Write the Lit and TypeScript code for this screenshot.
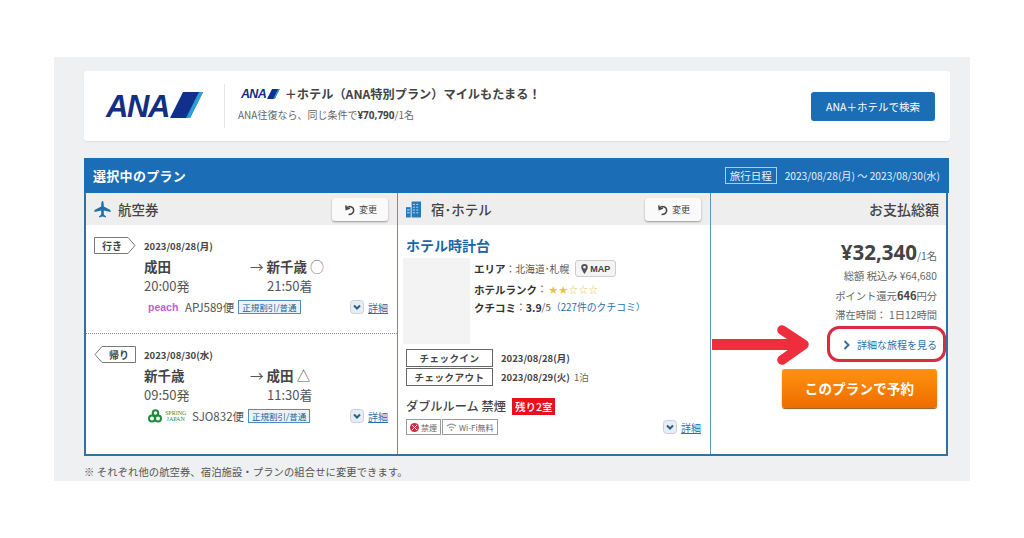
import { LitElement, html, css } from "lit";
import { customElement } from "lit/decorators.js";

const chevron = html`<svg class="chev" viewBox="0 0 14 14" width="14" height="14"><rect x=".5" y=".5" width="13" height="13" rx="3" fill="#e6edf3" stroke="#ccd"/><path d="M4 5.5 7 8.5 10 5.5" fill="none" stroke="#2a5f92" stroke-width="2"/></svg>`;
const undo = html`<svg viewBox="0 0 14 14" width="13" height="13"><path d="M3 2.5 3.5 7 7.5 5.5M3.8 5.5C6 3 11 3.2 11.5 7.5 11.8 10.5 9 12.5 6 12.5" fill="none" stroke="#444" stroke-width="1.6"/></svg>`;
const stripes = (h: number) => {
  const w = (h * 33) / 26;
  return html`<svg class="stripes" viewBox="0 0 33 26" width=${w} height=${h}><polygon points="13,0 33,0 20,26 0,26" fill="#10308c"/><polygon points="29,0 33,0 20,26 16,26" fill="#2a9fdc"/></svg>`;
};

@customElement("app-root")
export class AppRoot extends LitElement {
  static styles = css`
    :host { display: block; width: 1024px; height: 538px; background: #fff; font-family: "Noto Sans CJK JP", "Noto Sans", sans-serif; color: #444; overflow: hidden; }
    .panel { position: relative; margin: 57px 54px 0; width: 916px; height: 424px; box-sizing: border-box; background: #eef0f2; padding: 14px 20px 0 30px; overflow: hidden; }
    .promo { height: 70px; background: #fff; border-radius: 3px; box-shadow: 0 1px 1px #dde; display: flex; align-items: center; }
    .logo { width: 141px; height: 44px; border-right: 1px solid #e4e6e8; display: flex; align-items: flex-end; box-sizing: border-box; padding: 0 0 10px 22px; gap: 1px; }
    .ana { font: italic bold 31px "Liberation Sans", sans-serif; color: #12307f; letter-spacing: -1.4px; line-height: 22px; height: 22px; }
    .promo-text { flex: 1; padding-left: 13px; margin-top: -6px; }
    .promo-title { display: flex; align-items: center; font-size: 12.2px; font-weight: 700; color: #444; line-height: 18px; padding-left: 3px; gap: 5px; margin-bottom: 5px; }
    .mini { font: italic bold 12.5px "Liberation Sans", sans-serif; color: #12307f; letter-spacing: -.7px; display: flex; align-items: center; gap: 1px; }
    .promo-sub { font-size: 10px; line-height: 14px; color: #666; }
    .promo-sub b { color: #444; font-family: "Open Sans", sans-serif; }
    .search { width: 124px; height: 29px; margin-right: 15px; background: #1b6db6; border-radius: 3px; color: #fff; font-size: 10.5px; display: flex; align-items: center; justify-content: center; }
    .plan { margin-top: 17px; width: 865px; }
    .plan-head { height: 35px; background: #1b6db6; color: #fff; display: flex; align-items: center; justify-content: space-between; padding: 0 9px 0 9px; }
    .plan-title { font-size: 13px; font-weight: 700; letter-spacing: .3px; }
    .dates { display: flex; align-items: center; font-size: 10.2px; color: #e8f1f8; gap: 8px; white-space: nowrap; }
    .dates span.tag { border: 1px solid #a8cfe8; box-sizing: border-box; line-height: 15px; width: 52px; text-align: center; font-size: 10.5px; }
    .table { display: grid; grid-template-columns: 312px 313px 235px; height: 263px; background: #fff; border: solid #31719f; border-width: 0 2px 2px; width: 864px; box-sizing: border-box; }
    .col { display: flex; flex-direction: column; min-width: 0; border-right: 1px solid #5f93b8; }
    .col:last-child { border-right: 0; }
    .col-head { height: 32px; flex: none; background: #eeeeee; display: flex; align-items: center; padding: 0 9px 0 8px; gap: 7px; font-size: 13.5px; color: #444; box-sizing: border-box; }
    .col-head .name { flex: 1; font-weight: 500; }
    .col-head .bld { margin-right: 3px; }
    .change { width: 56px; height: 23px; background: #fafafa; border-radius: 3px; box-shadow: 0 1px 2px #999; display: flex; align-items: center; justify-content: center; gap: 3px; font-size: 9px; color: #444; }
    .leg { height: 110px; box-sizing: border-box; padding: 12px 9px 0 8px; display: flex; position: relative; }
    .leg.first { border-bottom: 1px dotted #889; height: 109px; }
    .tag-col { width: 50px; flex: none; }
    .badge { display: block; }
    .leg-body { flex: 1; min-width: 0; }
    .date { font-size: 9.5px; font-weight: 700; line-height: 14px; color: #444; margin-top: 2px; }
    .route { display: grid; grid-template-columns: 123px 1fr; font-size: 13.5px; line-height: 18px; font-weight: 700; margin-top: 4px; color: #444; }
    .route i { font-style: normal; font-weight: 400; color: #555; }
    .route .dest { margin-left: -17px; }
    .times { display: grid; grid-template-columns: 123px 1fr; font-size: 13px; line-height: 17px; color: #555; margin-top: 2px; }
    .flight { display: flex; align-items: center; font-size: 11.5px; color: #555; margin-top: 4px; height: 18px; gap: 4px; }
    .peach { font: bold 10.5px "Liberation Sans", sans-serif; color: #c060d0; margin-left: 4px; width: 33px; }
    .fare { font-size: 8.5px; border: 1px solid #4f8cc0; background: #eaf3fa; color: #235e96; padding: 0 3px; line-height: 12px; }
    .spring { display: flex; align-items: center; gap: 2px; width: 41px; font: 6px/6px "Liberation Serif", serif; color: #2a8a3c; text-align: center; margin-left: 3px; }
    .detail { margin-left: auto; display: flex; align-items: center; gap: 4px; font-size: 10px; color: #2a6fae; text-decoration: underline; }
    .hotel { padding: 12px 9px 0 8px; flex: 1; display: flex; flex-direction: column; }
    .hotel-name { font-size: 14px; font-weight: 700; color: #1b66a8; line-height: 17px; }
    .hotel-main { display: flex; margin-top: 4px; gap: 4px; height: 86px; margin-left: -3px; }
    .thumb { width: 67px; height: 86px; flex: none; background: #f3f3f3; }
    .facts { font-size: 9.8px; color: #555; flex: 1; }
    .facts div { display: flex; align-items: center; }
    .facts b { color: #333; font-weight: 700; font-size: 10.5px; }
    .f1 { height: 21px; }
    .f2 { height: 18px; margin-top: 1px; }
    .f3 { height: 18px; }
    .map { margin-left: 6px; height: 15px; padding: 0 5px; font: bold 9px "Liberation Sans", sans-serif; color: #444; background: #f4f4f4; border: 1px solid #ccc; border-radius: 3px; display: flex; align-items: center; gap: 2px; }
    .stars { color: #e8c440; font-size: 9px; letter-spacing: 1px; margin-left: 2px; }
    .link { color: #2a6fae; }
    .checks { margin-top: 5px; display: flex; flex-direction: column; gap: 1px; }
    .check { display: flex; align-items: center; font-size: 9.5px; font-weight: 700; color: #444; height: 18px; }
    .check span.k { width: 87px; height: 18px; box-sizing: border-box; border: 1px solid #666; display: flex; align-items: center; justify-content: center; margin-right: 8px; letter-spacing: .5px; }
    .check i { font-style: normal; font-weight: 400; margin-left: 4px; color: #666; }
    .room { display: flex; align-items: center; font-size: 12.2px; font-weight: 500; color: #444; margin-top: 11px; gap: 6px; height: 18px; }
    .left { background: #e8101c; color: #fff; font-size: 10.5px; padding: 0 3px; line-height: 17px; }
    .amen { display: flex; align-items: center; margin-top: 4px; gap: 1px; height: 16px; font-size: 8px; color: #666; }
    .amen span { border: 1px solid #999; height: 14px; display: flex; align-items: center; padding: 0 3px; gap: 2px; }
    .pay { text-align: right; font-size: 10.3px; color: #666; }
    .pay-head { justify-content: flex-end; font-size: 14px; font-weight: 500; padding-right: 7px; }
    .price { font: 700 20.5px "Open Sans", sans-serif; color: #444; margin-top: 13px; line-height: 28px; }
    .price small { font: 400 10.3px "Noto Sans CJK JP", sans-serif; color: #666; }
    .pay-lines { padding-right: 9px; }
    .line { line-height: 19.5px; }
    .line b { font-size: 11px; color: #444; }
    .more { display: flex; justify-content: flex-end; align-items: center; gap: 7px; color: #2a6fae; font-size: 10px; margin-top: 11px; height: 18px; padding-right: 9px; }
    .reserve { width: 155px; height: 39px; margin: 15px 9px 0 auto; background: linear-gradient(#ff930d, #ee6c00); border-radius: 3px; box-shadow: 0 1px 1px #8a5a20; color: #fff; font-size: 13.5px; font-weight: 700; display: flex; align-items: center; justify-content: center; letter-spacing: .2px; }
    .note { font-size: 10.3px; color: #555; margin-top: 9px; line-height: 14px; letter-spacing: .1px; }
    .ring { position: absolute; left: 773px; top: 269px; width: 119px; height: 36px; box-sizing: border-box; border: 3px solid #d92b42; border-radius: 12px; }
    .arrow { position: absolute; left: 658px; top: 266px; }
  `;

  leg(first: boolean, date: string, from: string, to: string, mark: string, dep: string, arr: string, logo: unknown, no: string) {
    return html`<div class="leg ${first ? "first" : ""}">
      <div class="tag-col">
        ${first
          ? html`<svg class="badge" width="42" height="17" viewBox="0 0 42 17"><path d="M.5.5H34L41 8.5 34 16.5H.5Z" fill="#fff" stroke="#777"/><text x="8" y="12.5" font-size="10" font-weight="700" fill="#444" font-family="Noto Sans CJK JP">行き</text></svg>`
          : html`<svg class="badge" width="42" height="17" viewBox="0 0 42 17"><path d="M41.5.5H8L1 8.5 8 16.5H41.5Z" fill="#fff" stroke="#777"/><text x="15" y="12.5" font-size="10" font-weight="700" fill="#444" font-family="Noto Sans CJK JP">帰り</text></svg>`}
      </div>
      <div class="leg-body">
        <div class="date">${date}</div>
        <div class="route"><span>${from}</span><span class="dest"><i>→</i> ${to} <i>${mark}</i></span></div>
        <div class="times"><span>${dep}</span><span>${arr}</span></div>
        <div class="flight">${logo}<span>${no}</span><span class="fare">正規割引/普通</span>
          <span class="detail">${chevron}詳細</span></div>
      </div>
    </div>`;
  }

  render() {
    const peach = html`<span class="peach">peach</span>`;
    const spring = html`<span class="spring"><svg width="16" height="14" viewBox="0 0 16 14"><g fill="none" stroke="#1f8a3a" stroke-width="2"><circle cx="5" cy="9.5" r="3"/><circle cx="11" cy="9.5" r="3"/><circle cx="8.5" cy="4" r="2.8"/></g></svg><span>SPRING<br/>JAPAN</span></span>`;
    return html`<div class="panel">
      <div class="promo">
        <div class="logo"><span class="ana">ANA</span>${stripes(26)}</div>
        <div class="promo-text">
          <div class="promo-title"><span class="mini">ANA${stripes(10)}</span><span>＋ホテル（ANA特別プラン）マイルもたまる！</span></div>
          <div class="promo-sub">ANA往復なら、同じ条件で<b>¥70,790</b>/1名</div>
        </div>
        <div class="search">ANA＋ホテルで検索</div>
      </div>
      <div class="plan">
        <div class="plan-head">
          <div class="plan-title">選択中のプラン</div>
          <div class="dates"><span class="tag">旅行日程</span><span>2023/08/28(月) ～ 2023/08/30(水)</span></div>
        </div>
        <div class="table">
          <div class="col">
            <div class="col-head">
              <svg width="17" height="17" viewBox="0 0 17 17"><path d="M8.5 0C9.5 0 9.8 2 9.8 5.5L16.5 9V11L9.8 9.5V13.5L12 15.5V16.5L8.5 15.5 5 16.5V15.5L7.2 13.5V9.5L.5 11V9L7.2 5.5C7.2 2 7.5 0 8.5 0Z" fill="#1f6fa8"/></svg>
              <span class="name">航空券</span>
              <span class="change">${undo}変更</span>
            </div>
            ${this.leg(true, "2023/08/28(月)", "成田", "新千歳", "◯", "20:00発", "21:50着", peach, "APJ589便")}
            ${this.leg(false, "2023/08/30(水)", "新千歳", "成田", "△", "09:50発", "11:30着", spring, "SJO832便")}
          </div>
          <div class="col">
            <div class="col-head">
              <svg class="bld" width="15" height="17" viewBox="0 0 16 17"><rect x="6" y="0" width="10" height="17" fill="#2a78b4"/><rect x="0" y="6" width="5" height="11" fill="#2a78b4"/><path d="M7.5 3h2M11 3h2M7.5 6h2M11 6h2M7.5 9h2M11 9h2M7.5 12h2M11 12h2M1 9h3M1 12h3" stroke="#cfe3f2" stroke-width="1"/></svg>
              <span class="name">宿･ホテル</span>
              <span class="change">${undo}変更</span>
            </div>
            <div class="hotel">
              <div class="hotel-name">ホテル時計台</div>
              <div class="hotel-main">
                <div class="thumb"></div>
                <div class="facts">
                  <div class="f1"><b>エリア</b>：北海道･札幌
                    <span class="map"><svg width="7" height="10" viewBox="0 0 7 10"><path d="M3.5 0A3.3 3.3 0 0 0 .2 3.3C.2 5.5 3.5 10 3.5 10S6.8 5.5 6.8 3.3A3.3 3.3 0 0 0 3.5 0Z" fill="#555"/><circle cx="3.5" cy="3.3" r="1.3" fill="#f4f4f4"/></svg>MAP</span></div>
                  <div class="f2"><b>ホテルランク</b>：<span class="stars">★★☆☆☆</span></div>
                  <div class="f3"><b>クチコミ</b>：<b>3.9</b>/5<span class="link">（227件のクチコミ）</span></div>
                </div>
              </div>
              <div class="checks">
                <div class="check"><span class="k">チェックイン</span>2023/08/28(月)</div>
                <div class="check"><span class="k">チェックアウト</span>2023/08/29(火)<i>1泊</i></div>
              </div>
              <div class="room">ダブルルーム 禁煙<span class="left">残り2室</span></div>
              <div class="amen">
                <span><svg width="9" height="9" viewBox="0 0 9 9"><circle cx="4.5" cy="4.5" r="4.5" fill="#c8323c"/><path d="M2 2l5 5M7 2 2 7" stroke="#fff"/></svg>禁煙</span>
                <span><svg width="11" height="8" viewBox="0 0 11 8"><path d="M1 3C4 .5 7 .5 10 3M3 5C4.5 3.8 6.5 3.8 8 5" fill="none" stroke="#999" stroke-width="1.2"/><circle cx="5.5" cy="7" r="1" fill="#999"/></svg>Wi-Fi無料</span>
                <div class="detail">${chevron}詳細</div>
              </div>
            </div>
          </div>
          <div class="col pay">
            <div class="col-head pay-head">お支払総額</div>
            <div class="pay-lines">
              <div class="price">¥32,340<small>/1名</small></div>
              <div class="line">総額 税込み ¥64,680</div>
              <div class="line">ポイント還元<b>646</b>円分</div>
              <div class="line">滞在時間： 1日12時間</div>
            </div>
            <div class="more"><svg width="7" height="10" viewBox="0 0 7 10"><path d="M1.5 1 5.5 5 1.5 9" fill="none" stroke="#3a709e" stroke-width="2"/></svg>詳細な旅程を見る</div>
            <div class="reserve">このプランで予約</div>
          </div>
        </div>
        <div class="note">※ それぞれ他の航空券、宿泊施設・プランの組合せに変更できます。</div>
      </div>
      <svg class="arrow" width="100" height="44" viewBox="0 0 100 44"><rect x="0" y="16" width="88" height="11" fill="#ee2d3d"/><path d="M70 7 92 21.5 70 37" fill="none" stroke="#ee2d3d" stroke-width="9.5" stroke-linecap="round" stroke-linejoin="round"/></svg>
      <div class="ring"></div>
    </div>`;
  }
}
